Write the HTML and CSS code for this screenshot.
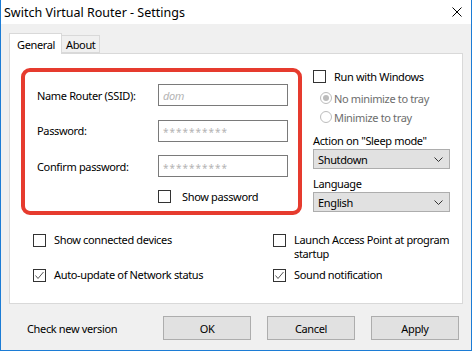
FILE: index.html
```html
<!DOCTYPE html>
<html lang="en">

<head>
    <meta charset="UTF-8">
    <title>Switch Virtual Router - Settings</title>
    <link rel="stylesheet" href="styles.css">
</head>

<body>
    <div class="window">
        <div class="titlebar">
            <span class="title">Switch Virtual Router - Settings</span>
            <svg class="close" width="10" height="10" viewBox="0 0 10 10">
                <path d="M0.5 0.5L9.5 9.5M9.5 0.5L0.5 9.5" stroke="#000" stroke-width="1" fill="none" />
            </svg>
        </div>

        <div class="client">
            <div class="tabs">
                <div class="tab active">General</div>
                <div class="tab">About</div>
            </div>

            <div class="panel">
                <div class="top">
                    <div class="highlight">
                        <div class="field">
                            <label>Name Router (SSID):</label>
                            <span class="textbox hint">dom</span>
                        </div>
                        <div class="field">
                            <label>Password:</label>
                            <span class="textbox stars">**********</span>
                        </div>
                        <div class="field">
                            <label>Confirm password:</label>
                            <span class="textbox stars">**********</span>
                        </div>
                        <div class="check show-pw"><span class="box"></span>Show password</div>
                    </div>

                    <div class="side">
                        <div class="check run"><span class="box"></span>Run with Windows</div>
                        <div class="radio first"><span class="dot on"></span>No minimize to tray</div>
                        <div class="radio"><span class="dot"></span>Minimize to tray</div>
                        <div class="caption">Action on "Sleep mode"</div>
                        <div class="combo">Shutdown
                            <svg width="9" height="5" viewBox="0 0 9 5"><path d="M0.5 0.5L4.5 4.5L8.5 0.5" stroke="#333" fill="none" /></svg>
                        </div>
                        <div class="caption lang">Language</div>
                        <div class="combo">English
                            <svg width="9" height="5" viewBox="0 0 9 5"><path d="M0.5 0.5L4.5 4.5L8.5 0.5" stroke="#333" fill="none" /></svg>
                        </div>
                    </div>
                </div>

                <div class="options">
                    <div class="check"><span class="box"></span>Show connected devices</div>
                    <div class="check"><span class="box"></span><span>Launch Access Point at program<br>startup</span></div>
                    <div class="check"><span class="box checked"><svg width="11" height="11" viewBox="0 0 11 11"><path d="M1.5 5.5L4 8.5L9.5 2" stroke="#555" stroke-width="1" fill="none" /></svg></span>Auto-update of Network status</div>
                    <div class="check"><span class="box checked"><svg width="11" height="11" viewBox="0 0 11 11"><path d="M1.5 5.5L4 8.5L9.5 2" stroke="#555" stroke-width="1" fill="none" /></svg></span>Sound notification</div>
                </div>
            </div>

            <div class="footer">
                <span class="link">Check new version</span>
                <div class="buttons">
                    <span class="button">OK</span>
                    <span class="button">Cancel</span>
                    <span class="button">Apply</span>
                </div>
            </div>
        </div>
    </div>
</body>

</html>
```

FILE: styles.css
```css
body {
    margin: 0;
    background: #fff;
    font-family: "Noto Sans", sans-serif;
    font-size: 11px;
    letter-spacing: -0.35px;
    color: #000;
}

.window {
    width: 472px;
    height: 351px;
    box-sizing: border-box;
    border: 1px solid #1c7cd5;
    border-top: none;
    display: flex;
    flex-direction: column;
}

.titlebar {
    height: 24px;
    display: flex;
    align-items: center;
    justify-content: space-between;
    padding: 0 9px 0 3px;
    background: #fff;
}

.title {
    font-size: 12.5px;
    letter-spacing: 0;
}

.client {
    flex: 1;
    background: #f0f0f0;
    padding: 9px 8px 0 8px;
}

/* tabs */
.tabs {
    position: relative;
    z-index: 1;
    height: 20px;
    display: flex;
    align-items: flex-end;
}

.tab {
    box-sizing: border-box;
    height: 18px;
    width: 39px;
    margin-left: -1px;
    border: 1px solid #d9d9d9;
    display: flex;
    align-items: center;
    padding-left: 4px;
}

.tab.active {
    height: 21px;
    width: 53px;
    margin: 0 0 -1px 0;
    background: #fff;
    border-bottom: none;
    padding-left: 7px;
}

.panel {
    height: 251px;
    box-sizing: border-box;
    border: 1px solid #d9d9d9;
    background: #fff;
    padding-top: 14px;
}

.top {
    display: flex;
    align-items: flex-start;
}

/* red marker around the network fields */
.highlight {
    width: 281px;
    height: 147px;
    box-sizing: border-box;
    margin-left: 11px;
    border: 4px solid #e63b2e;
    border-radius: 9px;
    padding: 12px 0 0 12px;
}

.field {
    display: flex;
    align-items: center;
    height: 22px;
    margin-bottom: 13.5px;
}

.field label {
    width: 121px;
}

.textbox {
    box-sizing: border-box;
    width: 130px;
    height: 22px;
    border: 1px solid #7a7a7a;
    padding-left: 4px;
    display: flex;
    align-items: center;
    color: #b4b4b4;
}

.hint {
    font-style: italic;
}

.stars {
    letter-spacing: 1px;
    font-size: 10px;
    padding-top: 3px;
}

.check {
    display: flex;
    align-items: center;
    gap: 8px;
}

.box {
    flex: none;
    box-sizing: border-box;
    width: 13px;
    height: 13px;
    border: 1px solid #333;
    background: #fff;
    display: flex;
    align-items: center;
    justify-content: center;
}

.show-pw {
    margin: -1.5px 0 0 121px;
    gap: 11px;
}

.side {
    margin-left: 11px;
    width: 137px;
}

.run {
    margin-top: 1px;
    height: 15px;
}

.radio {
    display: flex;
    align-items: center;
    gap: 2px;
    height: 16px;
    margin: 3px 0 0 7px;
    color: #6d6d6d;
}

.radio.first {
    margin-top: 6px;
}

.dot {
    box-sizing: border-box;
    width: 12px;
    height: 12px;
    border: 1px solid #bcbcbc;
    border-radius: 50%;
    display: flex;
    align-items: center;
    justify-content: center;
}

.dot.on::after {
    content: "";
    width: 6px;
    height: 6px;
    border-radius: 50%;
    background: #bcbcbc;
}

.caption {
    height: 14px;
    margin-top: 8px;
    display: flex;
    align-items: center;
}

.caption.lang {
    margin-top: 7px;
}

.combo {
    box-sizing: border-box;
    height: 20px;
    margin-top: 2px;
    border: 1px solid #adadad;
    background: #e1e1e1;
    display: flex;
    align-items: center;
    justify-content: space-between;
    padding: 0 6px 0 4px;
}

.options {
    display: grid;
    grid-template-columns: 240px 1fr;
    row-gap: 7px;
    padding: 18px 0 0 23px;
}

.options .check {
    align-items: flex-start;
    line-height: 14px;
}

.options .box {
    margin-top: 1px;
}

.footer {
    height: 24px;
    margin-top: 12px;
    display: flex;
    align-items: center;
    justify-content: space-between;
}

.link {
    margin-left: 18px;
}

.buttons {
    display: flex;
    gap: 16px;
    margin-right: 4px;
}

.button {
    box-sizing: border-box;
    width: 88px;
    height: 24px;
    border: 1px solid #adadad;
    background: #e1e1e1;
    display: flex;
    align-items: center;
    justify-content: center;
}
```
